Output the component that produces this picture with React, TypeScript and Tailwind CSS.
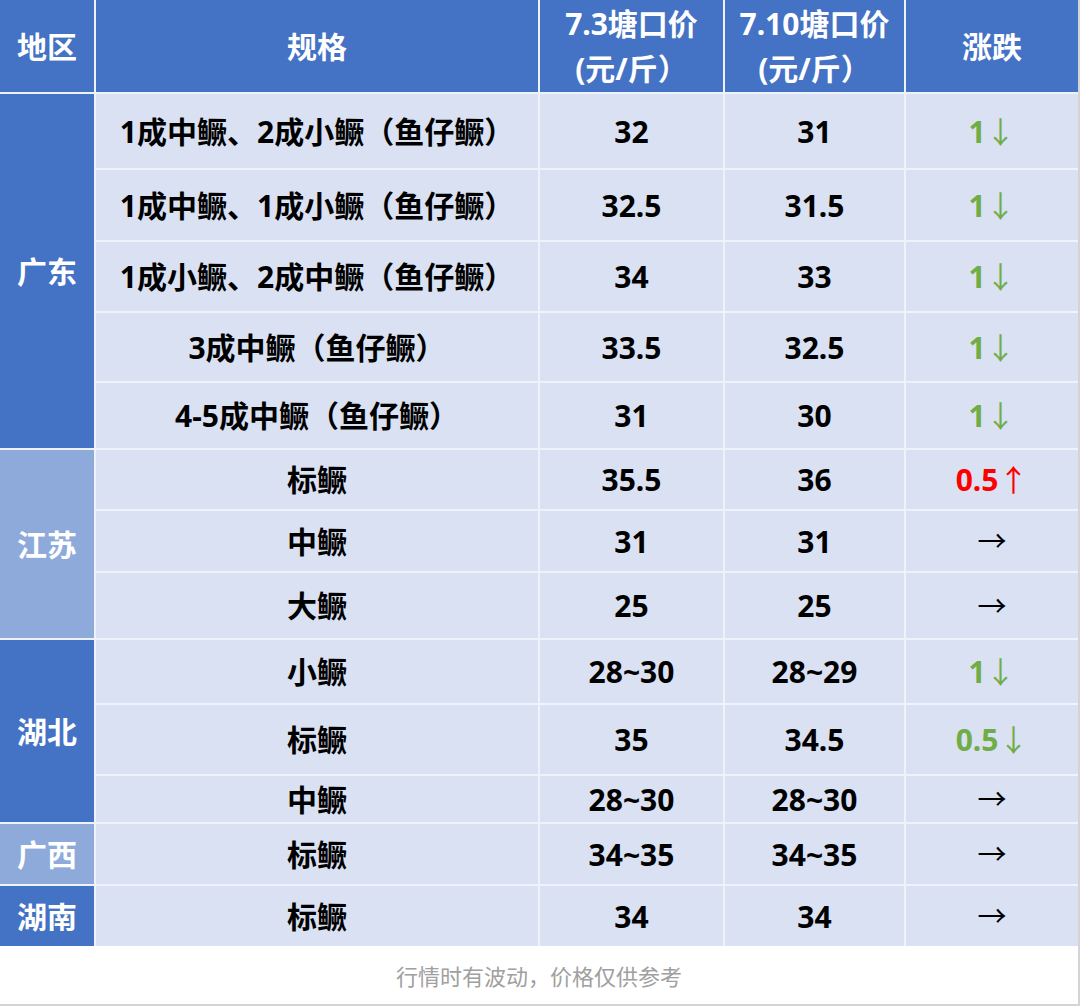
import React from "react";

type Row = {
  spec: string;
  a: string;
  b: string;
  chg: string;
  tone: "down" | "up" | "flat";
};

const rows: Row[] = [
  { spec: "1成中鳜、2成小鳜（鱼仔鳜）", a: "32", b: "31", chg: "1", tone: "down" },
  { spec: "1成中鳜、1成小鳜（鱼仔鳜）", a: "32.5", b: "31.5", chg: "1", tone: "down" },
  { spec: "1成小鳜、2成中鳜（鱼仔鳜）", a: "34", b: "33", chg: "1", tone: "down" },
  { spec: "3成中鳜（鱼仔鳜）", a: "33.5", b: "32.5", chg: "1", tone: "down" },
  { spec: "4-5成中鳜（鱼仔鳜）", a: "31", b: "30", chg: "1", tone: "down" },
  { spec: "标鳜", a: "35.5", b: "36", chg: "0.5", tone: "up" },
  { spec: "中鳜", a: "31", b: "31", chg: "", tone: "flat" },
  { spec: "大鳜", a: "25", b: "25", chg: "", tone: "flat" },
  { spec: "小鳜", a: "28~30", b: "28~29", chg: "1", tone: "down" },
  { spec: "标鳜", a: "35", b: "34.5", chg: "0.5", tone: "down" },
  { spec: "中鳜", a: "28~30", b: "28~30", chg: "", tone: "flat" },
  { spec: "标鳜", a: "34~35", b: "34~35", chg: "", tone: "flat" },
  { spec: "标鳜", a: "34", b: "34", chg: "", tone: "flat" },
];

const regions = [
  { name: "广东", start: 2, span: 5, dark: true },
  { name: "江苏", start: 7, span: 3, dark: false },
  { name: "湖北", start: 10, span: 3, dark: true },
  { name: "广西", start: 13, span: 1, dark: false },
  { name: "湖南", start: 14, span: 1, dark: true },
];

const rowStartClass: Record<number, string> = {
  2: "row-start-2",
  3: "row-start-3",
  4: "row-start-4",
  5: "row-start-5",
  6: "row-start-6",
  7: "row-start-7",
  8: "row-start-8",
  9: "row-start-9",
  10: "row-start-10",
  11: "row-start-11",
  12: "row-start-12",
  13: "row-start-13",
  14: "row-start-14",
};

const rowSpanClass: Record<number, string> = {
  1: "row-span-1",
  3: "row-span-3",
  5: "row-span-5",
};

const cell = "flex items-center justify-center bg-[#d9e1f2] text-black font-bold text-[30px]";

function Change({ r }: { r: Row }) {
  if (r.tone === "flat") {
    return <span className="font-normal text-black text-[29px]">→</span>;
  }
  if (r.tone === "up") {
    return (
      <span className="text-[#ff0000]">
        {r.chg}
        <span className="font-normal">↑</span>
      </span>
    );
  }
  return (
    <span className="text-[#70ad47]">
      {r.chg}
      <span className="font-normal">↓</span>
    </span>
  );
}

export default function App() {
  return (
    <div
      className="w-[1080px] h-[1006px] bg-white border-r-2 border-b-2 border-[#d4d4d4] flex flex-col"
      style={{ fontFamily: '"Noto Sans", "Noto Sans CJK SC", sans-serif' }}
    >
      <div className="grid grid-cols-[94px_442px_183px_179px_172px] grid-rows-[92px_74px_70px_69px_68px_65px_59px_60px_65px_63px_69px_46px_60px_60px] gap-[2px] bg-[#eef2fa] w-[1078px]">
        <div className="row-start-1 col-start-1 flex items-center justify-center bg-[#4472c4] text-white font-bold text-[30px]">
          地区
        </div>
        <div className="row-start-1 col-start-2 flex items-center justify-center bg-[#4472c4] text-white font-bold text-[30px]">
          规格
        </div>
        <div className="row-start-1 col-start-3 flex flex-col items-center justify-center bg-[#4472c4] text-white font-bold text-[30px] leading-[45px]">
          <span>7.3塘口价</span>
          <span>(元/斤）</span>
        </div>
        <div className="row-start-1 col-start-4 flex flex-col items-center justify-center bg-[#4472c4] text-white font-bold text-[30px] leading-[45px]">
          <span>7.10塘口价</span>
          <span>(元/斤）</span>
        </div>
        <div className="row-start-1 col-start-5 flex items-center justify-center bg-[#4472c4] text-white font-bold text-[30px]">
          涨跌
        </div>

        {regions.map((g) => (
          <div
            key={g.name}
            className={`col-start-1 ${rowStartClass[g.start]} ${rowSpanClass[g.span]} flex items-center justify-center text-white font-bold text-[30px] ${
              g.dark ? "bg-[#4472c4]" : "bg-[#8eaadb]"
            }`}
          >
            {g.name}
          </div>
        ))}

        {rows.map((r, i) => {
          const rs = rowStartClass[i + 2];
          return (
            <React.Fragment key={i}>
              <div className={`${rs} col-start-2 ${cell}`}>{r.spec}</div>
              <div className={`${rs} col-start-3 ${cell}`}>{r.a}</div>
              <div className={`${rs} col-start-4 ${cell}`}>{r.b}</div>
              <div className={`${rs} col-start-5 ${cell}`}>
                <Change r={r} />
              </div>
            </React.Fragment>
          );
        })}
      </div>
      <div className="flex-1 flex items-center justify-center text-[22px] text-[#a0a0a0] pt-[2px]">
        行情时有波动，价格仅供参考
      </div>
    </div>
  );
}
